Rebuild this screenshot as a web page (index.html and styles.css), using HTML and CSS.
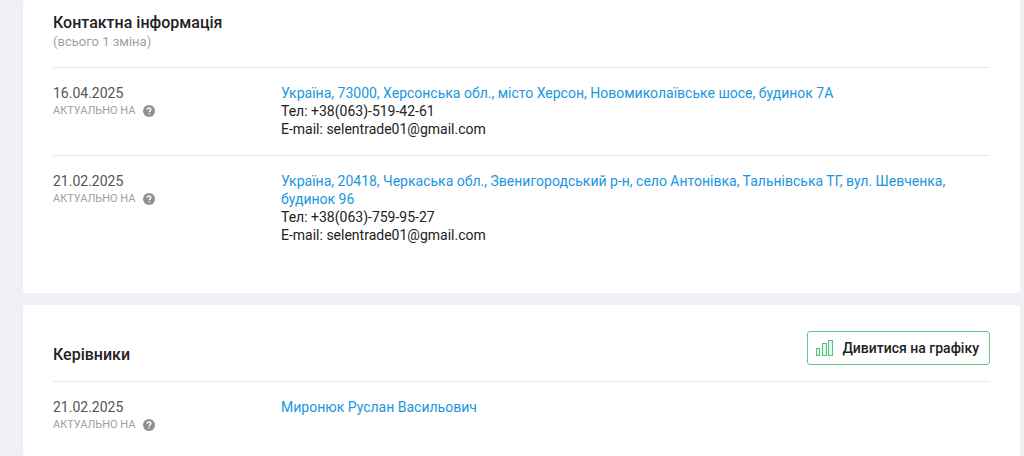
FILE: index.html
```html
<!DOCTYPE html>
<html lang="uk">
<head>
  <meta charset="UTF-8">
  <meta name="viewport" content="width=device-width, initial-scale=1.0">
  <title>Контактна інформація</title>
  <link rel="stylesheet" href="styles.css">
</head>
<body>
  <svg class="sprite" aria-hidden="true">
    <symbol id="help" viewBox="0 0 12 12">
      <circle cx="6" cy="6" r="6" fill="#8f8f8f"/>
      <path d="M4.2 4.8C4.2 2.4 7.9 2.5 7.9 4.6C7.9 5.9 6.1 5.9 6.1 7.2M6.1 8.2V9.5" fill="none" stroke="#fff" stroke-width="1.4"/>
    </symbol>
  </svg>
  <main class="page">
    <section class="card">
      <header class="card-header">
        <div>
          <h2>Контактна інформація</h2>
          <p class="changes">(всього 1 зміна)</p>
        </div>
      </header>
      <div class="row">
        <div class="row-date">
          <div class="date">16.04.2025</div>
          <div class="actual">АКТУАЛЬНО НА <svg class="help"><use href="#help"/></svg></div>
        </div>
        <div class="row-info">
          <a href="#">Україна, 73000, Херсонська обл., місто Херсон, Новомиколаївське шосе, будинок 7А</a>
          <div>Тел: +38(063)-519-42-61</div>
          <div>E-mail: selentrade01@gmail.com</div>
        </div>
      </div>
      <div class="row">
        <div class="row-date">
          <div class="date">21.02.2025</div>
          <div class="actual">АКТУАЛЬНО НА <svg class="help"><use href="#help"/></svg></div>
        </div>
        <div class="row-info">
          <a href="#">Україна, 20418, Черкаська обл., Звенигородський р-н, село Антонівка, Тальнівська ТГ, вул. Шевченка, будинок 96</a>
          <div>Тел: +38(063)-759-95-27</div>
          <div>E-mail: selentrade01@gmail.com</div>
        </div>
      </div>
    </section>

    <section class="card card-managers">
      <header class="card-header">
        <h2>Керівники</h2>
        <button type="button" class="graph-btn">
          <svg class="graph-icon" viewBox="0 0 18 16" fill="#e3f7ea" stroke="#4fc47d">
            <rect x="0.5" y="8.5" width="3" height="7"/>
            <rect x="6.5" y="3.5" width="4" height="12"/>
            <rect x="12.5" y="0.5" width="4" height="15"/>
          </svg>
          Дивитися на графіку
        </button>
      </header>
      <div class="row">
        <div class="row-date">
          <div class="date">21.02.2025</div>
          <div class="actual">АКТУАЛЬНО НА <svg class="help"><use href="#help"/></svg></div>
        </div>
        <div class="row-info">
          <a href="#">Миронюк Руслан Васильович</a>
        </div>
      </div>
    </section>
  </main>
</body>
</html>
```
FILE: styles.css
```css
* {
  box-sizing: border-box;
}
body {
  margin: 0;
  background: #eff0f6;
  font-family: Roboto, Arial, sans-serif;
  font-size: 14px;
  line-height: 18px;
  color: #222;
}
h2 {
  margin: 0;
  font-size: 16px;
  font-weight: 500;
  line-height: 20px;
}
a {
  color: #1a96de;
  text-decoration: none;
}
a:hover {
  text-decoration: underline;
}
.sprite {
  display: none;
}
.page {
  display: flex;
  flex-direction: column;
  gap: 12px;
  min-height: 100vh;
  padding: 0 4px 0 23px;
}
.card {
  padding: 13px 30px 32px;
  background: #fff;
  border-radius: 3px;
}
.card-managers {
  flex: 1;
  padding-top: 26px;
  padding-bottom: 0;
}
.card-header {
  display: flex;
  justify-content: space-between;
  align-items: flex-end;
  padding-bottom: 16px;
}
.changes {
  margin: 0;
  font-size: 13px;
  color: #a0a0a0;
}
.row {
  display: flex;
  padding: 16px 0 17px;
  border-top: 1px solid #e8e8e8;
}
.row-date {
  flex: 0 0 228px;
}
.date {
  color: #555;
}
.actual {
  display: flex;
  align-items: center;
  gap: 8px;
  font-size: 11px;
  color: #a0a0a0;
}
.help {
  width: 12px;
  height: 12px;
}
.row-info {
  flex: 1;
}
.graph-btn {
  display: flex;
  align-items: center;
  gap: 8px;
  height: 34px;
  padding: 0 10px 0 8px;
  border: 1px solid #5fca88;
  border-radius: 3px;
  background: #fff;
  font-family: inherit;
  font-size: 14px;
  font-weight: 500;
  color: #222;
  cursor: pointer;
}
.graph-icon {
  width: 18px;
  height: 16px;
}
```
